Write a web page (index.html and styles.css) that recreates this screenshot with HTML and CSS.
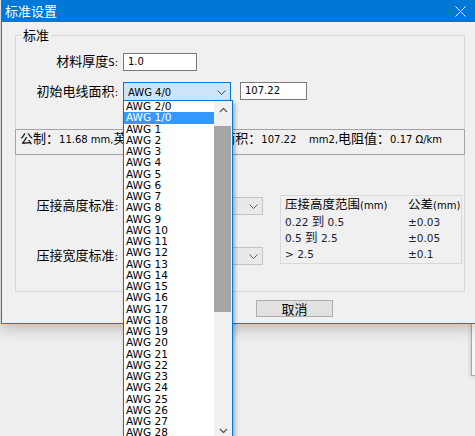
FILE: index.html
```html
<!DOCTYPE html>
<html lang="zh">
<head>
<meta charset="utf-8">
<title>标准设置</title>
<link rel="stylesheet" href="styles.css">
</head>
<body>
<div class="backwin"></div>
<div class="window">
  <div class="titlebar">
    <span class="title">标准设置</span>
    <svg class="close" width="11" height="11" viewBox="0 0 11 11"><path d="M0.5 0.5L10.5 10.5M10.5 0.5L0.5 10.5" stroke="#ffffff" stroke-width="1" fill="none"/></svg>
  </div>
  <div class="client">
    <fieldset class="group">
      <legend>标准</legend>
      <div class="row r1">
        <label class="lbl">材料厚度<span class="en">S:</span></label>
        <div class="edit thick">1.0</div>
      </div>
      <div class="row r2">
        <label class="lbl">初始电线面积<span class="en">:</span></label>
        <div class="combo active"><span>AWG 4/0</span><svg class="chev" width="9" height="5" viewBox="0 0 9 5"><polyline points="0.5,0.5 4.5,4.5 8.5,0.5" fill="none" stroke="#505050" stroke-width="1"/></svg></div>
        <div class="edit val">107.22</div>
      </div>
      <div class="info"><span class="zh">公制：</span>11.68 mm,<span class="zh">英制：</span>0.4600   in,<span class="zh">截面积：</span>107.22    mm2,<span class="zh">电阻值：</span>0.17 Ω/km</div>
      <div class="crimp">
        <div class="crimp-fields">
          <div class="row">
            <label class="lbl">压接高度标准<span class="en">:</span></label>
            <div class="combo plain"><span></span><svg class="chev" width="9" height="5" viewBox="0 0 9 5"><polyline points="0.5,0.5 4.5,4.5 8.5,0.5" fill="none" stroke="#606060" stroke-width="1"/></svg></div>
          </div>
          <div class="row">
            <label class="lbl">压接宽度标准<span class="en">:</span></label>
            <div class="combo plain"><span></span><svg class="chev" width="9" height="5" viewBox="0 0 9 5"><polyline points="0.5,0.5 4.5,4.5 8.5,0.5" fill="none" stroke="#606060" stroke-width="1"/></svg></div>
          </div>
        </div>
        <div class="tol">
          <div><span class="zh">压接高度范围</span>(mm)</div>
          <div><span class="zh">公差</span>(mm)</div>
          <div>0.22 <span class="zh">到</span> 0.5</div>
          <div>±0.03</div>
          <div>0.5 <span class="zh">到</span> 2.5</div>
          <div>±0.05</div>
          <div>&gt; 2.5</div>
          <div>±0.1</div>
        </div>
      </div>
    </fieldset>
    <div class="buttons"><button class="btn">取消</button></div>
  </div>
</div>
<div class="dropdown">
  <div class="items">
    <div class="item">AWG 2/0</div>
    <div class="item sel">AWG 1/0</div>
    <div class="item">AWG 1</div>
    <div class="item">AWG 2</div>
    <div class="item">AWG 3</div>
    <div class="item">AWG 4</div>
    <div class="item">AWG 5</div>
    <div class="item">AWG 6</div>
    <div class="item">AWG 7</div>
    <div class="item">AWG 8</div>
    <div class="item">AWG 9</div>
    <div class="item">AWG 10</div>
    <div class="item">AWG 11</div>
    <div class="item">AWG 12</div>
    <div class="item">AWG 13</div>
    <div class="item">AWG 14</div>
    <div class="item">AWG 15</div>
    <div class="item">AWG 16</div>
    <div class="item">AWG 17</div>
    <div class="item">AWG 18</div>
    <div class="item">AWG 19</div>
    <div class="item">AWG 20</div>
    <div class="item">AWG 21</div>
    <div class="item">AWG 22</div>
    <div class="item">AWG 23</div>
    <div class="item">AWG 24</div>
    <div class="item">AWG 25</div>
    <div class="item">AWG 26</div>
    <div class="item">AWG 27</div>
    <div class="item">AWG 28</div>
  </div>
  <div class="sbar">
    <div class="sbtn"><svg width="9" height="6" viewBox="0 0 9 6"><polyline points="1,5 4.5,1.5 8,5" fill="none" stroke="#606060" stroke-width="1.4"/></svg></div>
    <div class="track"><div class="thumb"></div></div>
    <div class="sbtn"><svg width="9" height="6" viewBox="0 0 9 6"><polyline points="1,1 4.5,4.5 8,1" fill="none" stroke="#606060" stroke-width="1.4"/></svg></div>
  </div>
</div>
</body>
</html>
```
FILE: styles.css
```css
* { box-sizing: border-box; }
html, body { margin: 0; height: 100%; overflow: hidden; }
body {
  background: #efefef;
  font-family: "DejaVu Sans", "Noto Sans CJK SC", sans-serif;
  font-size: 10px;
  color: #000;
  position: relative;
}
.zh { font-family: "Noto Sans CJK SC", sans-serif; font-size: 13px; }
.en { font-family: "DejaVu Sans", sans-serif; font-size: 10px; }

.backwin {
  position: absolute;
  left: 471px;
  top: 290px;
  width: 4px;
  height: 86px;
  background: #f7f7f7;
  border: 1px solid #a8a8a8;
  border-right: 0;
  box-shadow: 0 0 4px rgba(0,0,0,0.25);
}

.window {
  position: relative;
  z-index: 1;
  margin-left: 1px;
  width: 474px;
  border-left: 1px solid #1979ca;
  border-bottom: 1px solid #1979ca;
  background: #f0f0f0;
  box-shadow: 0 5px 14px rgba(0,0,0,0.22);
}
.titlebar {
  height: 22px;
  background: #0078d7;
  display: flex;
  align-items: center;
  justify-content: space-between;
  padding: 0 9px 0 3px;
  color: #fff;
}
.title { font-family: "Noto Sans CJK SC", sans-serif; font-size: 13px; line-height: 22px; }
.close { display: block; }

.client { height: 301px; padding-top: 5px; }

.group {
  margin: 0 0 0 13px;
  padding: 0 0 25px;
  width: 450px;
  min-width: 0;
  border: 1px solid #d7d7d7;
}
.group legend {
  margin-left: 5px;
  padding: 0 2px;
  font-family: "Noto Sans CJK SC", sans-serif;
  font-size: 13px;
  line-height: 16px;
}

.row { display: flex; align-items: center; }
.lbl {
  width: 102px;
  margin-right: 5px;
  text-align: right;
  font-family: "Noto Sans CJK SC", sans-serif;
  font-size: 13px;
  line-height: 18px;
  white-space: nowrap;
}
.r1 { margin-top: 9px; }
.r2 { margin-top: 10px; }

.edit {
  background: #fff;
  border: 1px solid #7a7a7a;
  height: 18px;
  padding: 0 4px;
  line-height: 16px;
  font-size: 10px;
}
.thick { width: 74px; }
.val { width: 67px; margin-left: 9px; align-self: flex-start; }

.combo {
  display: flex;
  align-items: center;
  justify-content: space-between;
  padding: 0 4px 0 4px;
  font-size: 10px;
}
.combo.active {
  width: 108px;
  height: 20px;
  background: #cce4f7;
  border: 1px solid #0078d7;
}
.combo.plain {
  width: 140px;
  height: 18px;
  background: #e9e9e9;
  border: 1px solid #c3c3c3;
}
.chev { display: block; }

.info {
  margin: 27px -1px 0;
  height: 26px;
  border: 1px solid #a3a3a3;
  padding: 0 0 0 4px;
  line-height: 15px;
  white-space: pre;
  font-size: 10px;
}

.crimp { display: flex; align-items: flex-start; margin-top: 40px; }
.crimp-fields { padding-top: 1px; display: flex; flex-direction: column; gap: 30px; }

.tol {
  margin-left: 17px;
  width: 182px;
  height: 69px;
  border: 1px solid #d9d9d9;
  padding: 1px 0 0 4px;
  display: grid;
  grid-template-columns: 123px auto;
  grid-auto-rows: 16.4px;
  align-items: center;
  font-size: 10.5px;
  line-height: 16px;
  color: #1c1c30;
  white-space: nowrap;
}
.tol .zh { font-size: 12.5px; }
.tol > div:nth-child(-n+2) { font-size: 10px; color: #000; }

.buttons { margin-top: 8px; padding-left: 254px; }
.btn {
  display: block;
  width: 77px;
  height: 17px;
  padding: 0;
  background: #e1e1e1;
  border: 1px solid #adadad;
  font-family: "Noto Sans CJK SC", sans-serif;
  font-size: 13px;
  line-height: 15px;
  color: #000;
}

.dropdown {
  position: absolute;
  z-index: 2;
  left: 123px;
  top: 100px;
  width: 110px;
  height: 340px;
  border: 1px solid #0078d7;
  background: #fff;
  display: flex;
  box-shadow: 2px 3px 4px rgba(0,0,0,0.3);
}
.items { width: 90px; }
.item {
  height: 11.25px;
  line-height: 11.25px;
  padding-left: 2px;
  font-size: 10.5px;
  white-space: nowrap;
}
.item.sel { background: #3399ff; color: #fff; }
.sbar { width: 18px; background: #f0f0f0; display: flex; flex-direction: column; }
.sbtn { height: 17px; display: flex; align-items: center; justify-content: center; }
.sbtn svg { display: block; }
.track { flex: 1; }
.thumb { margin: 8px 1px 0 0; height: 186px; background: #a6a6a6; }
```
